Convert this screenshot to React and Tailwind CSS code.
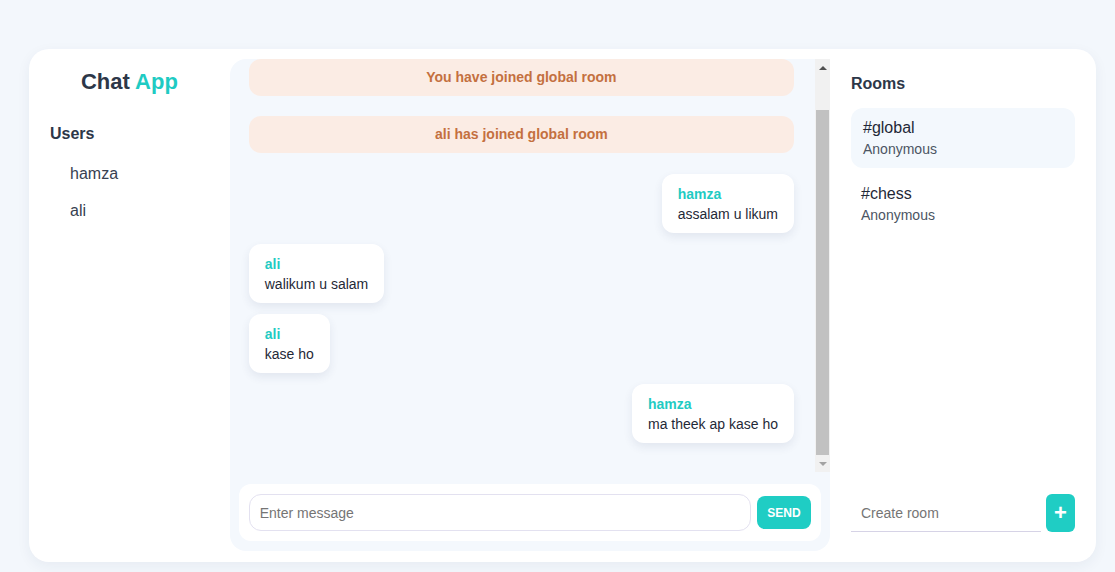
import React from "react";

const teal = "text-[#1fcbc3]";

const notices = ["You have joined global room", "ali has joined global room"];

const messages = [
  { user: "hamza", text: "assalam u likum", mine: true },
  { user: "ali", text: "walikum u salam", mine: false },
  { user: "ali", text: "kase ho", mine: false },
  { user: "hamza", text: "ma theek ap kase ho", mine: true },
];

const users = ["hamza", "ali"];

const rooms = [
  { name: "#global", by: "Anonymous", active: true },
  { name: "#chess", by: "Anonymous", active: false },
];

const Scrollbar = () => (
  <div className="w-[15px] bg-[#f1f1f1] flex flex-col items-center">
    <div className="h-[17px] flex items-center justify-center">
      <div className="w-0 h-0 border-l-[4px] border-r-[4px] border-b-[4px] border-l-transparent border-r-transparent border-b-[#505050]" />
    </div>
    <div className="h-[34px]" />
    <div className="w-[13px] flex-1 bg-[#c1c1c1]" />
    <div className="h-[17px] flex items-center justify-center">
      <div className="w-0 h-0 border-l-[4px] border-r-[4px] border-t-[4px] border-l-transparent border-r-transparent border-t-[#a3a3a3]" />
    </div>
  </div>
);

const App = () => {
  return (
    <div
      className="w-[1115px] h-[572px] bg-[#f3f7fc] pt-[49px] pl-[29px] overflow-hidden"
      style={{ fontFamily: '"Liberation Sans", Arial, sans-serif' }}
    >
      <div className="w-[1067px] h-[513px] bg-white rounded-[20px] shadow-[0_4px_14px_rgba(30,50,90,0.06)] flex">
        {/* users */}
        <div className="w-[201px] flex flex-col">
          <h1 className="text-[22px] font-bold text-center mt-[20px] leading-[26px] text-[#2d3748]">
            Chat <span className={teal}>App</span>
          </h1>
          <h2 className="text-[16px] font-bold text-[#2d3748] pl-[21px] mt-[29px] leading-5">Users</h2>
          <ul className="mt-[20px] pl-[41px]">
            {users.map((u, index) => (
              <li key={index} className="text-[16px] text-[#374151] leading-5 mb-[17px]">
                {u}
              </li>
            ))}
          </ul>
        </div>

        {/* chat */}
        <div className="w-[601px] mt-[10px] mb-[11px] bg-[#f4f8fd] rounded-2xl flex flex-col">
          <div className="h-[413px] flex">
            <div className="flex-1 overflow-hidden pl-[19px] pr-[21px] flex flex-col">
              <div className="flex flex-col gap-[20px]">
                {notices.map((n, index) => (
                  <div
                    key={index}
                    className="h-[37px] shrink-0 bg-[#fbece4] rounded-xl flex items-center justify-center text-[14px] font-bold text-[#c4703f]"
                  >
                    {n}
                  </div>
                ))}
              </div>
              <div className="mt-[21px] flex flex-col gap-[11px]">
                {messages.map((m, index) => (
                  <div key={index} className={`flex ${m.mine ? "justify-end" : "justify-start"}`}>
                    <div className="bg-white rounded-xl px-4 pt-[10px] pb-[9px] shadow-[0_4px_10px_rgba(40,60,100,0.09)]">
                      <div className={`text-[14px] font-bold leading-5 ${teal}`}>{m.user}</div>
                      <div className="text-[14px] leading-5 text-[#1f2937]">{m.text}</div>
                    </div>
                  </div>
                ))}
              </div>
            </div>
            <Scrollbar />
          </div>
          <div className="mt-[12px] mx-[9px] bg-white rounded-xl p-[10px] flex items-center gap-[6px]">
            <input
              className="flex-1 h-[37px] border border-[#e3e1f0] rounded-xl px-[10px] text-[14px] text-[#1f2937] placeholder-[#757575] outline-none"
              placeholder="Enter message"
            />
            <button className="w-[54px] h-[33px] rounded-lg bg-[#1fcdc4] text-white text-[12px] font-bold">
              SEND
            </button>
          </div>
        </div>

        {/* rooms */}
        <div className="flex-1 flex flex-col justify-between pl-[21px] pr-[21px] pb-[30px]">
          <div>
            <h2 className="text-[16px] font-bold text-[#2d3748] mt-[25px] leading-5">Rooms</h2>
            <div className="mt-[14px] flex flex-col">
              {rooms.map((r, index) => (
                <div
                  key={index}
                  className={`h-[60px] rounded-xl pt-[10px] ${r.active ? "bg-[#f3f8fd] px-3 mb-[6px]" : "px-[10px]"}`}
                >
                  <div className="text-[16px] leading-5 text-[#1f2937]">{r.name}</div>
                  <div className="text-[14px] leading-5 text-[#4b5563] mt-px">{r.by}</div>
                </div>
              ))}
            </div>
          </div>
          <div className="flex items-end gap-[5px]">
            <input
              className="w-[190px] h-[37px] border-b border-[#d6d3e6] px-[10px] text-[14px] placeholder-[#757575] outline-none"
              placeholder="Create room"
            />
            <button className="w-[29px] h-[38px] rounded-md bg-[#1fcdc4] text-white text-[22px] font-bold leading-none flex items-center justify-center">
              +
            </button>
          </div>
        </div>
      </div>
    </div>
  );
};

export default App;
